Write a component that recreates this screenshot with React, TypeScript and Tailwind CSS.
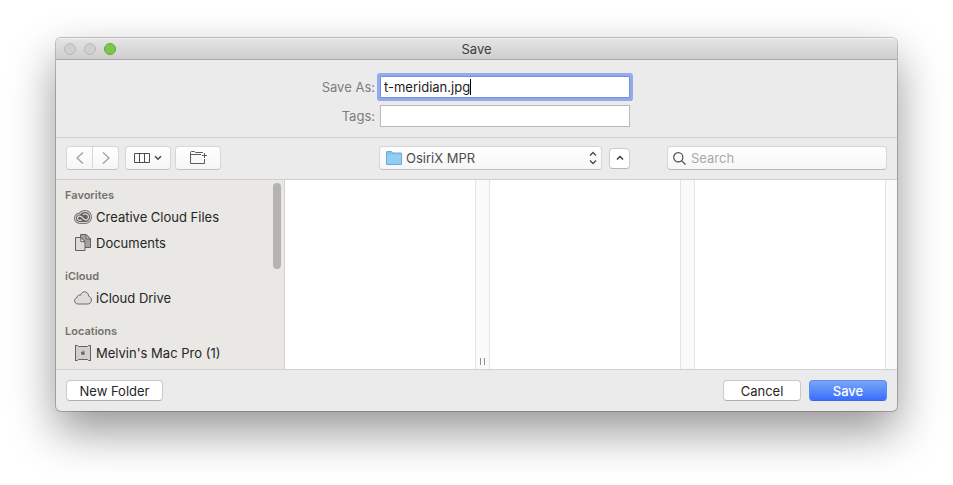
import type { ReactNode } from 'react';

const sidebar = [
  {
    title: 'Favorites',
    items: [
      { label: 'Creative Cloud Files', icon: <CreativeCloudIcon /> },
      { label: 'Documents', icon: <DocumentsIcon /> },
    ],
  },
  { title: 'iCloud', items: [{ label: 'iCloud Drive', icon: <CloudIcon /> }] },
  { title: 'Locations', items: [{ label: "Melvin's Mac Pro (1)", icon: <ComputerIcon /> }] },
];

function CreativeCloudIcon() {
  return (
    <svg width="18" height="18" viewBox="0 0 18 18" fill="none">
      <path d="M5 4.800C6.400 3 8.600 2 11 2c3.900 0 7 3 7 7s-3.100 7-7 7H6c-3.400 0-6-2.500-6-5.700 0-2.900 2.200-5.200 5-5.500z" fill="#7b7a78" />
      <path d="M5.600 5.700C6.800 4 8.700 3 11 3c3.400 0 6 2.600 6 6s-2.600 6-6 6H6c-2.900 0-5-2.100-5-4.700s2-4.500 4.600-4.600z" fill="#d2d1ce" />
      <path d="M6.200 6.500C7.300 4.900 9 4 11 4c2.900 0 5.100 2.200 5.100 5s-2.200 5-5.100 5H6c-2.300 0-4.100-1.600-4.100-3.700S3.800 6.500 6.200 6.500z" fill="#636260" />
      <path d="M7.800 11.800c-1.900 1.300-4.300.3-4.300-1.600 0-2 2.300-2.900 4-1.400l2.300 2.200c1.900 1.700 4.700.5 4.700-2 0-2.800-3.400-4.200-5.500-2.200" stroke="#d9d8d5" strokeWidth="1.200" />
    </svg>
  );
}

function DocumentsIcon() {
  return (
    <svg width="18" height="18" viewBox="0 0 18 18" stroke="#636260">
      <path d="M6.500 .5h5.500l4.500 4.500v8.500h-10z" fill="#a3a2a0" />
      <path d="M12 .5V5h4.500z" fill="#c9c8c5" />
      <path d="M1.500 3.500H7l4 4v9H1.500z" fill="#dcdbd8" />
      <path d="M6.800 3.500v4.200H11z" fill="#f0efed" />
    </svg>
  );
}

function CloudIcon() {
  return (
    <svg width="18" height="18" viewBox="0 0 18 18" fill="#dddcd9" stroke="#6b6b69">
      <path d="M4.300 15C2 15 .6 13.600 .6 11.700c0-1.700 1.100-2.800 2.500-3.100-.1-1.900 1.900-3.200 3.400-2.300C7.200 4 8.700 2.800 10.500 2.800c2.300 0 4.100 1.800 4.200 4.400 1.700 .5 2.700 1.900 2.700 3.800 0 2.400-1.500 4-3.600 4z" />
    </svg>
  );
}

function ComputerIcon() {
  return (
    <svg width="18" height="18" viewBox="0 0 18 18" fill="none">
      <path d="M2 2h14v14H2z" fill="#d0cfcc" />
      <path d="M1.500 1v16M16.500 1v16M1 1.500h2.500l1 1h9l1-1H17M1 16.500h2.500l1-1h9l1 1H17" stroke="#636260" />
      <path d="M9 7.700c-1.400-.7-2.200 .2-2 1.500 .2 1.200 1 2.100 2 1.600 1 .5 1.700-.3 2-1.300-.9-.5-.8-1.400-.1-1.800-.5-.4-1.200-.4-1.900 0zM9 7.400c0-.8 .4-1.200 1-1.300 0 .8-.4 1.200-1 1.300z" fill="#6a6967" />
    </svg>
  );
}

function ToolButton({ label, className, children }: { label: string; className: string; children: ReactNode }) {
  return (
    <button
      type="button"
      aria-label={label}
      className={`flex h-6 items-center justify-center border border-[#d6d6d6] border-b-[#c2c2c2] bg-linear-to-b from-white to-[#f6f6f6] ${className}`}
    >
      {children}
    </button>
  );
}

function Gutter({ grip }: { grip?: boolean }) {
  return (
    <div className="flex w-[15px] shrink-0 items-end justify-center gap-[3px] border-x border-[#e4e4e4] bg-[#fafafa] pb-1">
      {grip && (
        <>
          <span className="h-[7px] w-px bg-[#909090]" />
          <span className="h-[7px] w-px bg-[#909090]" />
        </>
      )}
    </div>
  );
}

export default function App() {
  return (
    <div className="min-h-screen bg-white px-14 pt-[38px] pb-[74px] font-['Inter','Liberation_Sans',sans-serif] text-[13px] leading-4 text-[#262626]">
      <main className="overflow-hidden rounded-[5px] bg-[#ebebeb] shadow-[0_0_0_1px_rgba(0,0,0,0.22),0_20px_46px_rgba(0,0,0,0.42)]">
        <header className="grid h-[22px] grid-cols-[1fr_auto_1fr] items-center border-t border-b border-t-[#f4f4f4] border-b-[#a9a9a9] bg-linear-to-b from-[#e4e4e4] to-[#cfcfcf] px-2">
          <div className="flex gap-2">
            <button type="button" aria-label="Close" className="size-3 rounded-full border border-[#b9b9b9] bg-[#cfcfcf]" />
            <button type="button" aria-label="Minimize" className="size-3 rounded-full border border-[#b9b9b9] bg-[#cfcfcf]" />
            <button type="button" aria-label="Zoom" className="size-3 rounded-full border border-[#62ab3b] bg-[#7ac64f]" />
          </div>
          <h1 className="text-[#404040]">Save</h1>
        </header>

        <section className="grid grid-cols-[52px_250px] items-center justify-center gap-x-[5px] gap-y-[7px] border-b border-[#d0d0d0] pt-4 pb-[10px]">
          <label htmlFor="filename" className="justify-self-end whitespace-nowrap text-[#7d7d7d]">
            Save As:
          </label>
          <div className="flex h-[22px] items-center rounded-[1px] border border-[#7391dc] bg-white pl-[3px] ring-[3px] ring-[#91abec]">
            <input id="filename" defaultValue="t-meridian.jpg" className="field-sizing-content text-[#1c1c1c] caret-transparent outline-none" />
            <span className="h-4 w-px bg-black" />
          </div>
          <label htmlFor="tags" className="justify-self-end whitespace-nowrap text-[#7d7d7d]">
            Tags:
          </label>
          <input id="tags" className="h-[22px] border border-[#bababa] bg-white px-[3px] outline-none" />
        </section>

        <nav className="flex items-center border-b border-[#d0d0d0] px-[10px] pt-2 pb-[9px]">
          <div className="flex w-[313px] shrink-0">
            <ToolButton label="Back" className="w-[27px] rounded-l-[4px]">
              <svg width="8" height="14" viewBox="0 0 8 14" fill="none" stroke="#a3a3a3" strokeWidth="1.4">
                <path d="M7 1.500 1 7l6 5.500" />
              </svg>
            </ToolButton>
            <ToolButton label="Forward" className="-ml-px w-[27px] rounded-r-[4px]">
              <svg width="8" height="14" viewBox="0 0 8 14" fill="none" stroke="#a3a3a3" strokeWidth="1.4">
                <path d="M1 1.500 7 7l-6 5.500" />
              </svg>
            </ToolButton>
            <ToolButton label="View" className="ml-[6px] w-[46px] gap-1 rounded-[4px]">
              <svg width="16" height="10" viewBox="0 0 16 10" fill="none" stroke="#4c4c4c">
                <path d="M.5 .5h15v9H.5zM5.500 .5v9M10.500 .5v9" />
              </svg>
              <svg width="8" height="6" viewBox="0 0 8 6" fill="none" stroke="#4c4c4c" strokeWidth="1.6">
                <path d="m1 1.200 3 3 3-3" />
              </svg>
            </ToolButton>
            <ToolButton label="Create folder" className="ml-1 w-[46px] rounded-[4px]">
              <svg width="18" height="14" viewBox="0 0 18 14" fill="none" stroke="#5c5c5c">
                <path d="M15.500 8v4.500H1.500V1.500q0-1 1-1h3l1 1h7.500M1.500 3.500H12M15.500 2v5M13 4.500h5" />
              </svg>
            </ToolButton>
          </div>

          <div className="relative flex-1">
            <select
              aria-label="Where"
              className="block h-6 w-full appearance-none rounded-[4px] border border-[#d6d6d6] border-b-[#c2c2c2] bg-linear-to-b from-white to-[#f6f6f6] pl-[26px] text-[#4c4c4c]"
            >
              <option>OsiriX MPR</option>
            </select>
            <svg className="pointer-events-none absolute top-[5px] left-[7px]" width="16" height="14" viewBox="0 0 16 14">
              <path d="M.5 13V1Q.5 .5 1 .5h4.500l1.200 1.500H15q.5 0 .5 .5V13q0 .5-.5 .5H1Q.5 13.500 .5 13z" fill="#84c5f2" stroke="#67acdc" />
              <path d="M1 4h14v8.500H1z" fill="#92cdf6" />
            </svg>
            <svg className="pointer-events-none absolute top-[5px] right-[5px]" width="8" height="14" viewBox="0 0 8 14" fill="none" stroke="#4c4c4c" strokeWidth="1.4">
              <path d="m1 4.500 3-3 3 3M1 9.500l3 3 3-3" />
            </svg>
          </div>

          <button
            type="button"
            aria-label="Collapse"
            className="mr-[37px] ml-[7px] flex h-[21px] w-[21px] items-center justify-center rounded-[4px] border border-[#cdcdcd] border-b-[#b5b5b5] bg-white"
          >
            <svg width="8" height="6" viewBox="0 0 8 6" fill="none" stroke="#3c3c3c" strokeWidth="1.5">
              <path d="m1 4.500 3-3 3 3" />
            </svg>
          </button>

          <label className="flex h-6 w-[220px] items-center gap-[5px] rounded-[4px] border border-[#d6d6d6] border-b-[#b8b8b8] bg-linear-to-b from-white to-[#f6f6f6] px-[5px]">
            <svg className="shrink-0" width="13" height="13" viewBox="0 0 13 13" fill="none" stroke="#4c4c4c" strokeWidth="1.2">
              <circle cx="5.300" cy="5.300" r="4.600" />
              <path d="m8.600 8.600 3.900 3.900" />
            </svg>
            <input type="search" aria-label="Search" placeholder="Search" className="w-full min-w-0 outline-none placeholder:text-[#a9a9a9]" />
          </label>
        </nav>

        <div className="flex h-[189px] bg-white">
          <aside className="flex w-[229px] shrink-0 justify-between overflow-hidden border-r border-[#d4d3d1] bg-[#e9e8e4] pr-[3px]">
            <div className="flex flex-col gap-3 pt-[7px]">
              {sidebar.map((group) => (
                <section key={group.title}>
                  <h2 className="pl-[9px] text-[11px] leading-[17px] font-semibold text-[#737270]">{group.title}</h2>
                  <ul>
                    {group.items.map((item) => (
                      <li key={item.label} className="flex h-[26px] items-center gap-1 pl-[18px] whitespace-nowrap">
                        {item.icon}
                        {item.label}
                      </li>
                    ))}
                  </ul>
                </section>
              ))}
            </div>
            <div className="mt-[3px] h-[86px] w-2 rounded-full bg-[#b5b4b1]" />
          </aside>
          <div className="flex min-w-0 flex-1 overflow-hidden">
            <div className="w-[190px] shrink-0" />
            <Gutter grip />
            <div className="w-[190px] shrink-0" />
            <Gutter />
            <div className="w-[190px] shrink-0" />
            <div className="flex-1 border-l border-[#e4e4e4] bg-[#fafafa]" />
          </div>
        </div>

        <footer className="flex gap-2 border-t border-[#d0d0d0] p-[10px]">
          <button type="button" className="mr-auto h-[21px] w-[97px] rounded-[4px] border border-[#c9c9c9] border-b-[#b0b0b0] bg-white">
            New Folder
          </button>
          <button type="button" className="h-[21px] w-[78px] rounded-[4px] border border-[#c9c9c9] border-b-[#b0b0b0] bg-white">
            Cancel
          </button>
          <button
            type="submit"
            className="h-[21px] w-[78px] rounded-[4px] border border-[#5c8cf0] border-b-[#3a66e8] bg-linear-to-b from-[#7aa5f8] to-[#3a6dfb] font-medium text-white"
          >
            Save
          </button>
        </footer>
      </main>
    </div>
  );
}
